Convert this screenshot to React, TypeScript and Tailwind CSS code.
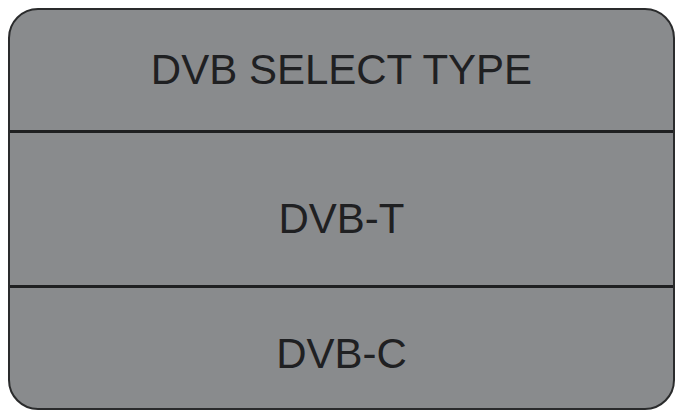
export default function App() {
  return (
    <div className="h-[412px] w-[679px] bg-white pl-[8px] pt-[8px] font-['Liberation_Sans',Arial,sans-serif] text-[42px] leading-none text-[#1f2022]">
      <div className="flex h-[402px] w-[667px] flex-col overflow-hidden rounded-[30px] border-2 border-[#2a2b2c] bg-[#898b8d]">
        {/* title row */}
        <div className="flex h-[120px] shrink-0 items-center justify-center">
          DVB SELECT TYPE
        </div>
        <div className="h-[3px] shrink-0 bg-[#1f2021]" />
        <div className="flex h-[152px] shrink-0 items-center justify-center pt-[20px]">
          DVB-T
        </div>
        <div className="h-[3px] shrink-0 bg-[#1f2021]" />
        <div className="flex flex-1 items-center justify-center pt-[12px]">
          DVB-C
        </div>
      </div>
    </div>
  );
}
